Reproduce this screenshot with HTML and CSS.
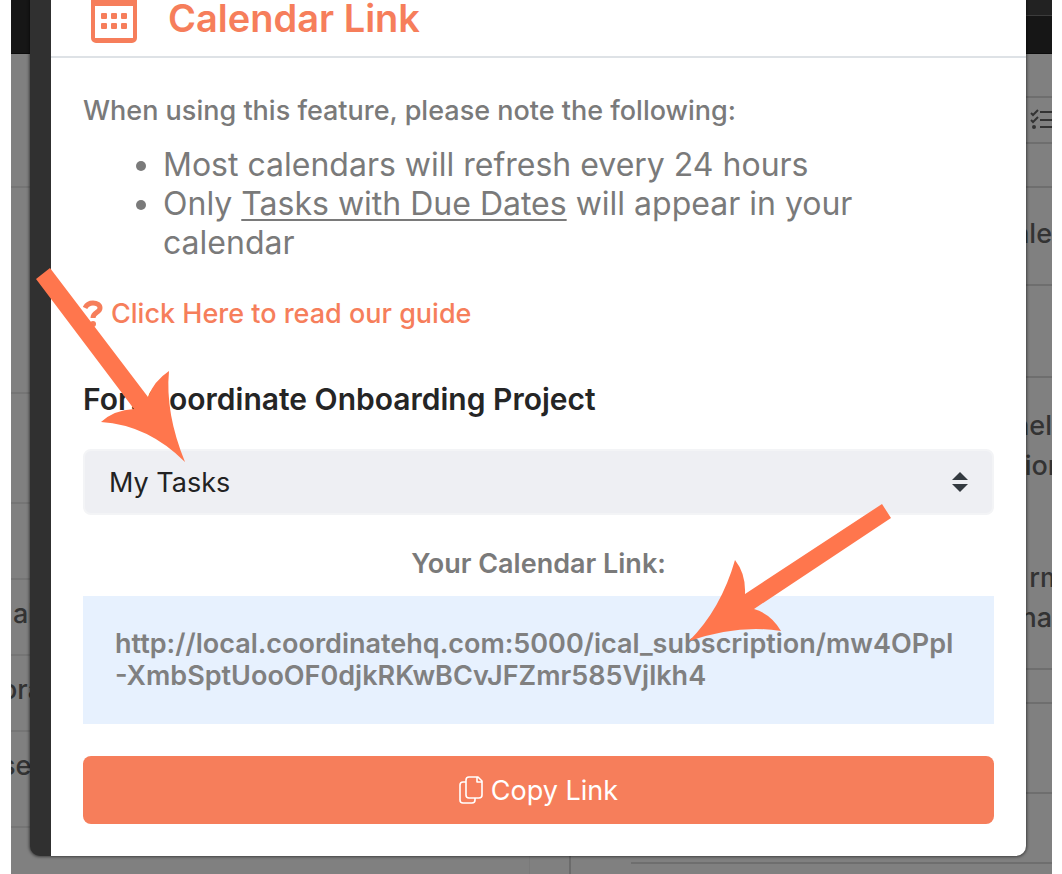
FILE: index.html
```html
<!DOCTYPE html>
<html lang="en">
<head>
    <meta charset="UTF-8">
    <meta name="viewport" content="width=device-width, initial-scale=1.0">
    <title>Calendar Link</title>
    <link rel="stylesheet" href="styles.css">
</head>
<body>

    <div class="stage">
        <!-- dimmed project page -->
        <div class="project" aria-hidden="true">
            <div class="topbar"><div class="topbar-tabs"></div></div>
            <div class="columns">
                <div class="sidebar">
                    <div class="row row-132"></div>
                    <div class="row row-206"></div>
                    <div class="row row-110"></div>
                    <div class="row row-76"></div>
                    <div class="row row-76"><span>al</span></div>
                    <div class="row row-76"><span class="cut">ora</span></div>
                    <div class="row row-96"><span class="cut">se</span></div>
                </div>
                <div class="gutter"></div>
                <div class="details">
                    <div class="row row-44"></div>
                    <div class="row row-46">
                        <svg class="tasks-icon" width="30" height="22" viewBox="0 0 30 22" fill="none" stroke="#333" stroke-width="2">
                            <path d="M1 4l2 2 5-5M1 11l2 2 5-5M10 3h20M10 11h20M10 18h20"/>
                            <circle cx="4" cy="18" r="1"/>
                        </svg>
                    </div>
                    <div class="row row-44"></div>
                    <div class="row row-98"><span>ale</span></div>
                    <div class="row row-92"></div>
                    <div class="row row-292">
                        <p><span>nel</span><span class="cut-end">ion</span></p>
                        <p><span class="cut-end">rm</span><span>na</span></p>
                    </div>
                    <div class="row row-34"></div>
                    <div class="row row-90"></div>
                    <div class="row row-70 inset"></div>
                </div>
            </div>
        </div>

        <div class="modal" role="dialog" aria-labelledby="modalTitle">
            <div class="modal-header">
                <svg class="calendar-icon" width="48" height="52" viewBox="0 0 48 52" fill="#f67e5b">
                    <path fill-rule="evenodd" d="M6 2h36a5 5 0 0 1 5 5v40a5 5 0 0 1-5 5H6a5 5 0 0 1-5-5V7a5 5 0 0 1 5-5zM5 15v32h38V15z"/>
                    <rect x="11" y="22" width="6" height="6" rx="1"/>
                    <rect x="21" y="22" width="6" height="6" rx="1"/>
                    <rect x="31" y="22" width="6" height="6" rx="1"/>
                    <rect x="11" y="32" width="6" height="6" rx="1"/>
                    <rect x="21" y="32" width="6" height="6" rx="1"/>
                    <rect x="31" y="32" width="6" height="6" rx="1"/>
                </svg>
                <h1 id="modalTitle">Calendar Link</h1>
            </div>

            <div class="modal-body">
                <p class="intro">When using this feature, please note the following:</p>
                <ul class="notes">
                    <li>Most calendars will refresh every 24 hours</li>
                    <li>Only <u>Tasks with Due Dates</u> will appear in your calendar</li>
                </ul>

                <a class="guide" href="#">
                    <svg width="20" height="28" viewBox="0 0 20 28" fill="none" stroke="#f67e5b" stroke-width="5">
                        <path d="M2 8c2-4 5-5 8-5 4 0 7 2 7 5 0 5-7 4-7 10"/>
                        <circle cx="10" cy="24" r="3" fill="#f67e5b" stroke="none"/>
                    </svg>
                    Click Here to read our guide
                </a>

                <label class="project-label" for="taskFilter">For: Coordinate Onboarding Project</label>
                <div class="select-wrap">
                    <select id="taskFilter">
                        <option>My Tasks</option>
                        <option>All Tasks</option>
                    </select>
                    <svg class="caret" width="16" height="20" viewBox="0 0 16 20" fill="#343a40">
                        <path d="M8 0l8 8H0zM8 20l8-8H0z"/>
                    </svg>
                </div>

                <h2 class="link-title">Your Calendar Link:</h2>
                <p class="link-box">http://local.coordinatehq.com:5000/ical_subscription/mw4OPpI-XmbSptUooOF0djkRKwBCvJFZmr585Vjlkh4</p>

                <button class="btn" type="button">
                    <svg width="24" height="28" viewBox="0 0 24 28" fill="none" stroke="#fff" stroke-width="1.6" stroke-linejoin="round">
                        <path d="M10 1h9l4 4v14a3 3 0 0 1-3 3H10a3 3 0 0 1-3-3V4a3 3 0 0 1 3-3zM18 1v5h5M7 6H4a3 3 0 0 0-3 3v15a3 3 0 0 0 3 3h9a3 3 0 0 0 3-3v-2"/>
                    </svg>
                    Copy Link
                </button>
            </div>
        </div>

        <svg class="arrow arrow-select" width="149" height="194" viewBox="0 0 149 194" fill="#ff764d">
            <path d="M0 11L14 0L112 129Q118 113 133 103Q129 145 149 194Q112 157 65 154Q78 142 98 141Z"/>
        </svg>
        <svg class="arrow arrow-link" width="202" height="137" viewBox="0 0 202 137" fill="#ff764d">
            <path d="M193 0L202 14L65 105Q82 110 92 127Q50 120 0 137Q32 105 46 56Q57 70 56 90Z"/>
        </svg>
    </div>

</body>
</html>
```
FILE: styles.css
```css
* {
    box-sizing: border-box;
}

body {
    margin: 0;
    background-color: #fff;
    color: #7a7a7a;
    font-family: Inter, "Liberation Sans", sans-serif;
    font-size: 27px;
}

h1,
h2,
p,
ul {
    margin: 0;
}

.stage {
    position: relative;
    height: 100vh;
    margin: 0 10px 0 11px;
    overflow: hidden;
}

/* page behind the dialog */
.project {
    min-height: 100%;
    background-color: #808080;
    color: #333;
    font-weight: 500;
}

.topbar {
    height: 54px;
    background-color: #161616;
    border-bottom: 1px solid #0c0c0c;
}

.topbar-tabs {
    height: 16px;
    margin-left: 50%;
    background-color: #222;
    border-bottom: 1px solid #3c3c3c;
}

.columns {
    display: grid;
    grid-template-columns: 518px 42px 1fr;
    min-height: 820px;
}

.gutter {
    border-left: 1px solid #7a7a7a;
    border-right: 2px solid #6b6b6b;
}

.row {
    border-bottom: 2px solid #757575;
    line-height: 40px;
}

.sidebar .row {
    padding: 14px 0 0 2px;
}

.details .row {
    display: flex;
    flex-direction: column;
    align-items: flex-end;
    overflow: hidden;
    border-color: #6e6e6e;
}

.details p {
    display: flex;
    flex-direction: column;
    align-items: flex-end;
}

.cut {
    margin-left: -12px;
}

.cut-end {
    margin-right: -12px;
}

.tasks-icon {
    flex: none;
    margin: 11px -8px 0 0;
}

.row-34 { height: 34px; }
.row-44 { height: 44px; }
.row-46 { height: 46px; }
.row-70 { height: 70px; }
.row-76 { height: 76px; }
.row-90 { height: 90px; }
.row-92 { height: 92px; }
.row-96 { height: 96px; }
.row-98 { height: 98px; padding-top: 26px; }
.row-110 { height: 110px; }
.row-132 { height: 134px; }
.row-206 { height: 206px; }

.row-292 {
    height: 292px;
    gap: 72px;
    padding-top: 28px;
}

.inset {
    margin-left: 60px;
}

/* dialog */
.modal {
    position: absolute;
    top: 0;
    left: 19px;
    right: 26px;
    background-color: #fff;
    border-left: 21px solid #303030;
    border-radius: 0 0 10px 10px;
    box-shadow: 0 0 3px 1px rgba(0, 0, 0, 0.5);
}

.modal-header {
    display: flex;
    align-items: flex-end;
    gap: 30px;
    height: 58px;
    padding: 0 39px 13px;
    border-bottom: 2px solid #dee2e6;
}

.calendar-icon {
    flex: none;
}

.modal-header h1 {
    color: #f67e5b;
    font-size: 38px;
    font-weight: 600;
    line-height: 50px;
}

.modal-body {
    padding: 32px;
}

.intro {
    font-weight: 500;
    line-height: 42px;
}

.notes {
    margin-top: 13px;
    padding: 0 80px;
    font-size: 32px;
    line-height: 39px;
}

.notes u {
    text-decoration-thickness: 2px;
    text-underline-offset: 4px;
}

.guide {
    display: flex;
    align-items: center;
    gap: 8px;
    margin-top: 31px;
    color: #f67e5b;
    font-weight: 500;
    line-height: 42px;
    text-decoration: none;
}

.project-label {
    display: block;
    margin: 43px 0 29px;
    color: #252525;
    font-size: 30px;
    font-weight: 600;
    line-height: 42px;
}

.select-wrap {
    position: relative;
}

.select-wrap select {
    width: 100%;
    height: 66px;
    padding: 0 24px;
    appearance: none;
    background-color: #eeeff3;
    border: 2px solid #f3f4f6;
    border-radius: 8px;
    color: #222;
    font-family: inherit;
    font-size: 27px;
}

.caret {
    position: absolute;
    top: 23px;
    right: 26px;
    pointer-events: none;
}

.link-title {
    margin: 28px 0 11px;
    font-size: 27px;
    font-weight: 600;
    line-height: 42px;
    text-align: center;
}

.link-box {
    padding: 32px;
    background-color: #e7f1fe;
    color: #808080;
    font-weight: 600;
    line-height: 32px;
    word-break: break-all;
}

.btn {
    display: flex;
    align-items: center;
    justify-content: center;
    gap: 8px;
    width: 100%;
    height: 68px;
    margin-top: 32px;
    background-color: #f67e5b;
    border: none;
    border-radius: 8px;
    color: #fff;
    cursor: pointer;
    font-family: inherit;
    font-size: 27px;
}

/* pointer arrows */
.arrow {
    position: absolute;
    pointer-events: none;
}

.arrow-select {
    top: 268px;
    left: 25px;
}

.arrow-link {
    top: 504px;
    right: 161px;
}
```
